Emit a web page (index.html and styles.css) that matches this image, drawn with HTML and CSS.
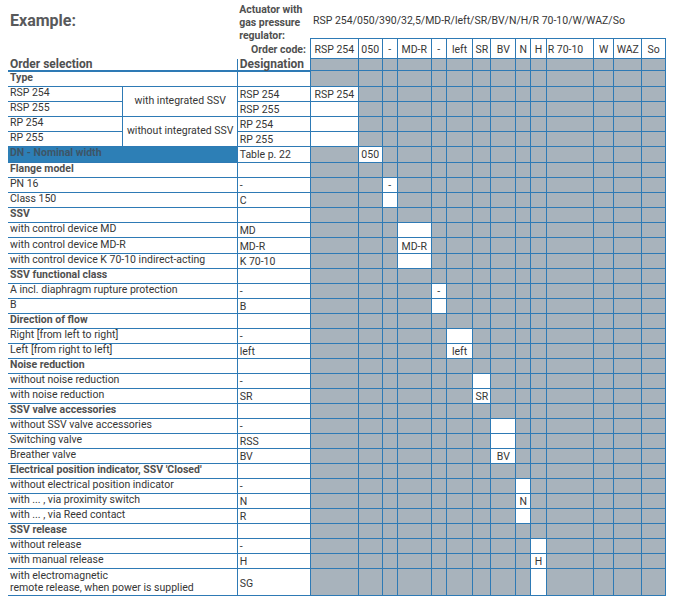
FILE: index.html
```html
<!DOCTYPE html>
<html lang="en">
<head>
<meta charset="utf-8">
<title>Example order code</title>
<link rel="stylesheet" href="styles.css">
</head>
<body>
<table class="sheet">
<colgroup>
<col class="c1"><col class="c2"><col class="c3">
<col class="k1"><col class="k2"><col class="k3"><col class="k4"><col class="k5"><col class="k6"><col class="k7">
<col class="k8"><col class="k9"><col class="k10"><col class="k11"><col class="k12"><col class="k13"><col class="k14">
</colgroup>
<tbody>
<tr class="top">
<td colspan="2" class="title">Example:</td>
<td class="act"><div class="act-text">Actuator with<br>gas pressure<br>regulator:</div></td>
<td colspan="14" class="code">RSP 254/050/390/32,5/MD-R/left/SR/BV/N/H/R 70-10/W/WAZ/So</td>
</tr>
<tr class="codes">
<td colspan="2"></td>
<td class="oc">Order code:</td>
<td class="h">RSP 254</td><td class="h">050</td><td class="h">-</td><td class="h">MD-R</td><td class="h">-</td><td class="h">left</td><td class="h">SR</td><td class="h">BV</td><td class="h">N</td><td class="h">H</td><td class="h hl">R 70-10</td><td class="h">W</td><td class="h">WAZ</td><td class="h">So</td>
</tr>
<tr class="sel">
<td colspan="2" class="sh">Order selection</td>
<td class="sh sd">Designation</td>
<td class="g"></td><td class="g"></td><td class="g"></td><td class="g"></td><td class="g"></td><td class="g"></td><td class="g"></td><td class="g"></td><td class="g"></td><td class="g"></td><td class="g"></td><td class="g"></td><td class="g"></td><td class="g"></td>
</tr>

<tr class="ra"><td colspan="2" class="l b">Type</td><td class="d"></td><td class="g"></td><td class="g"></td><td class="g"></td><td class="g"></td><td class="g"></td><td class="g"></td><td class="g"></td><td class="g"></td><td class="g"></td><td class="g"></td><td class="g"></td><td class="g"></td><td class="g"></td><td class="g"></td></tr>
<tr class="ra"><td class="l s">RSP 254</td><td rowspan="2" class="sub">with integrated SSV</td><td class="d">RSP 254</td><td class="w">RSP 254</td><td class="g"></td><td class="g"></td><td class="g"></td><td class="g"></td><td class="g"></td><td class="g"></td><td class="g"></td><td class="g"></td><td class="g"></td><td class="g"></td><td class="g"></td><td class="g"></td><td class="g"></td></tr>
<tr class="ra"><td class="l s">RSP 255</td><td class="d">RSP 255</td><td class="w"></td><td class="g"></td><td class="g"></td><td class="g"></td><td class="g"></td><td class="g"></td><td class="g"></td><td class="g"></td><td class="g"></td><td class="g"></td><td class="g"></td><td class="g"></td><td class="g"></td><td class="g"></td></tr>
<tr class="ra"><td class="l s">RP 254</td><td rowspan="2" class="sub">without integrated SSV</td><td class="d">RP 254</td><td class="w"></td><td class="g"></td><td class="g"></td><td class="g"></td><td class="g"></td><td class="g"></td><td class="g"></td><td class="g"></td><td class="g"></td><td class="g"></td><td class="g"></td><td class="g"></td><td class="g"></td><td class="g"></td></tr>
<tr class="ra"><td class="l s">RP 255</td><td class="d">RP 255</td><td class="w"></td><td class="g"></td><td class="g"></td><td class="g"></td><td class="g"></td><td class="g"></td><td class="g"></td><td class="g"></td><td class="g"></td><td class="g"></td><td class="g"></td><td class="g"></td><td class="g"></td><td class="g"></td></tr>
<tr class="rdn"><td colspan="2" class="l b dn">DN - Nominal width</td><td class="d">Table p. 22</td><td class="g"></td><td class="w">050</td><td class="g"></td><td class="g"></td><td class="g"></td><td class="g"></td><td class="g"></td><td class="g"></td><td class="g"></td><td class="g"></td><td class="g"></td><td class="g"></td><td class="g"></td><td class="g"></td></tr>
<tr class="ra"><td colspan="2" class="l b">Flange model</td><td class="d"></td><td class="g"></td><td class="g"></td><td class="g"></td><td class="g"></td><td class="g"></td><td class="g"></td><td class="g"></td><td class="g"></td><td class="g"></td><td class="g"></td><td class="g"></td><td class="g"></td><td class="g"></td><td class="g"></td></tr>
<tr class="ra"><td colspan="2" class="l">PN 16</td><td class="d">-</td><td class="g"></td><td class="g"></td><td class="w">-</td><td class="g"></td><td class="g"></td><td class="g"></td><td class="g"></td><td class="g"></td><td class="g"></td><td class="g"></td><td class="g"></td><td class="g"></td><td class="g"></td><td class="g"></td></tr>
<tr class="ra"><td colspan="2" class="l">Class 150</td><td class="d">C</td><td class="g"></td><td class="g"></td><td class="w"></td><td class="g"></td><td class="g"></td><td class="g"></td><td class="g"></td><td class="g"></td><td class="g"></td><td class="g"></td><td class="g"></td><td class="g"></td><td class="g"></td><td class="g"></td></tr>
<tr class="ra"><td colspan="2" class="l b">SSV</td><td class="d"></td><td class="g"></td><td class="g"></td><td class="g"></td><td class="g"></td><td class="g"></td><td class="g"></td><td class="g"></td><td class="g"></td><td class="g"></td><td class="g"></td><td class="g"></td><td class="g"></td><td class="g"></td><td class="g"></td></tr>
<tr class="ra"><td colspan="2" class="l">with control device MD</td><td class="d">MD</td><td class="g"></td><td class="g"></td><td class="g"></td><td class="w"></td><td class="g"></td><td class="g"></td><td class="g"></td><td class="g"></td><td class="g"></td><td class="g"></td><td class="g"></td><td class="g"></td><td class="g"></td><td class="g"></td></tr>
<tr class="ra"><td colspan="2" class="l">with control device MD-R</td><td class="d">MD-R</td><td class="g"></td><td class="g"></td><td class="g"></td><td class="w">MD-R</td><td class="g"></td><td class="g"></td><td class="g"></td><td class="g"></td><td class="g"></td><td class="g"></td><td class="g"></td><td class="g"></td><td class="g"></td><td class="g"></td></tr>
<tr class="ra"><td colspan="2" class="l">with control device K 70-10 indirect-acting</td><td class="d">K 70-10</td><td class="g"></td><td class="g"></td><td class="g"></td><td class="w"></td><td class="g"></td><td class="g"></td><td class="g"></td><td class="g"></td><td class="g"></td><td class="g"></td><td class="g"></td><td class="g"></td><td class="g"></td><td class="g"></td></tr>
<tr class="ra"><td colspan="2" class="l b">SSV functional class</td><td class="d"></td><td class="g"></td><td class="g"></td><td class="g"></td><td class="g"></td><td class="g"></td><td class="g"></td><td class="g"></td><td class="g"></td><td class="g"></td><td class="g"></td><td class="g"></td><td class="g"></td><td class="g"></td><td class="g"></td></tr>
<tr class="ra"><td colspan="2" class="l">A incl. diaphragm rupture protection</td><td class="d">-</td><td class="g"></td><td class="g"></td><td class="g"></td><td class="g"></td><td class="w">-</td><td class="g"></td><td class="g"></td><td class="g"></td><td class="g"></td><td class="g"></td><td class="g"></td><td class="g"></td><td class="g"></td><td class="g"></td></tr>
<tr class="ra"><td colspan="2" class="l">B</td><td class="d">B</td><td class="g"></td><td class="g"></td><td class="g"></td><td class="g"></td><td class="w"></td><td class="g"></td><td class="g"></td><td class="g"></td><td class="g"></td><td class="g"></td><td class="g"></td><td class="g"></td><td class="g"></td><td class="g"></td></tr>
<tr><td colspan="2" class="l b">Direction of flow</td><td class="d"></td><td class="g"></td><td class="g"></td><td class="g"></td><td class="g"></td><td class="g"></td><td class="g"></td><td class="g"></td><td class="g"></td><td class="g"></td><td class="g"></td><td class="g"></td><td class="g"></td><td class="g"></td><td class="g"></td></tr>
<tr><td colspan="2" class="l">Right [from left to right]</td><td class="d">-</td><td class="g"></td><td class="g"></td><td class="g"></td><td class="g"></td><td class="g"></td><td class="w"></td><td class="g"></td><td class="g"></td><td class="g"></td><td class="g"></td><td class="g"></td><td class="g"></td><td class="g"></td><td class="g"></td></tr>
<tr><td colspan="2" class="l">Left [from right to left]</td><td class="d">left</td><td class="g"></td><td class="g"></td><td class="g"></td><td class="g"></td><td class="g"></td><td class="w">left</td><td class="g"></td><td class="g"></td><td class="g"></td><td class="g"></td><td class="g"></td><td class="g"></td><td class="g"></td><td class="g"></td></tr>
<tr><td colspan="2" class="l b">Noise reduction</td><td class="d"></td><td class="g"></td><td class="g"></td><td class="g"></td><td class="g"></td><td class="g"></td><td class="g"></td><td class="g"></td><td class="g"></td><td class="g"></td><td class="g"></td><td class="g"></td><td class="g"></td><td class="g"></td><td class="g"></td></tr>
<tr><td colspan="2" class="l">without noise reduction</td><td class="d">-</td><td class="g"></td><td class="g"></td><td class="g"></td><td class="g"></td><td class="g"></td><td class="g"></td><td class="w"></td><td class="g"></td><td class="g"></td><td class="g"></td><td class="g"></td><td class="g"></td><td class="g"></td><td class="g"></td></tr>
<tr><td colspan="2" class="l">with noise reduction</td><td class="d">SR</td><td class="g"></td><td class="g"></td><td class="g"></td><td class="g"></td><td class="g"></td><td class="g"></td><td class="w">SR</td><td class="g"></td><td class="g"></td><td class="g"></td><td class="g"></td><td class="g"></td><td class="g"></td><td class="g"></td></tr>
<tr><td colspan="2" class="l b">SSV valve accessories</td><td class="d"></td><td class="g"></td><td class="g"></td><td class="g"></td><td class="g"></td><td class="g"></td><td class="g"></td><td class="g"></td><td class="g"></td><td class="g"></td><td class="g"></td><td class="g"></td><td class="g"></td><td class="g"></td><td class="g"></td></tr>
<tr><td colspan="2" class="l">without SSV valve accessories</td><td class="d">-</td><td class="g"></td><td class="g"></td><td class="g"></td><td class="g"></td><td class="g"></td><td class="g"></td><td class="g"></td><td class="w"></td><td class="g"></td><td class="g"></td><td class="g"></td><td class="g"></td><td class="g"></td><td class="g"></td></tr>
<tr><td colspan="2" class="l">Switching valve</td><td class="d">RSS</td><td class="g"></td><td class="g"></td><td class="g"></td><td class="g"></td><td class="g"></td><td class="g"></td><td class="g"></td><td class="w"></td><td class="g"></td><td class="g"></td><td class="g"></td><td class="g"></td><td class="g"></td><td class="g"></td></tr>
<tr><td colspan="2" class="l">Breather valve</td><td class="d">BV</td><td class="g"></td><td class="g"></td><td class="g"></td><td class="g"></td><td class="g"></td><td class="g"></td><td class="g"></td><td class="w">BV</td><td class="g"></td><td class="g"></td><td class="g"></td><td class="g"></td><td class="g"></td><td class="g"></td></tr>
<tr><td colspan="2" class="l b">Electrical position indicator, SSV 'Closed'</td><td class="d"></td><td class="g"></td><td class="g"></td><td class="g"></td><td class="g"></td><td class="g"></td><td class="g"></td><td class="g"></td><td class="g"></td><td class="g"></td><td class="g"></td><td class="g"></td><td class="g"></td><td class="g"></td><td class="g"></td></tr>
<tr><td colspan="2" class="l">without electrical position indicator</td><td class="d">-</td><td class="g"></td><td class="g"></td><td class="g"></td><td class="g"></td><td class="g"></td><td class="g"></td><td class="g"></td><td class="g"></td><td class="w"></td><td class="g"></td><td class="g"></td><td class="g"></td><td class="g"></td><td class="g"></td></tr>
<tr><td colspan="2" class="l">with ... , via proximity switch</td><td class="d">N</td><td class="g"></td><td class="g"></td><td class="g"></td><td class="g"></td><td class="g"></td><td class="g"></td><td class="g"></td><td class="g"></td><td class="w">N</td><td class="g"></td><td class="g"></td><td class="g"></td><td class="g"></td><td class="g"></td></tr>
<tr><td colspan="2" class="l">with ... , via Reed contact</td><td class="d">R</td><td class="g"></td><td class="g"></td><td class="g"></td><td class="g"></td><td class="g"></td><td class="g"></td><td class="g"></td><td class="g"></td><td class="w"></td><td class="g"></td><td class="g"></td><td class="g"></td><td class="g"></td><td class="g"></td></tr>
<tr><td colspan="2" class="l b">SSV release</td><td class="d"></td><td class="g"></td><td class="g"></td><td class="g"></td><td class="g"></td><td class="g"></td><td class="g"></td><td class="g"></td><td class="g"></td><td class="g"></td><td class="g"></td><td class="g"></td><td class="g"></td><td class="g"></td><td class="g"></td></tr>
<tr><td colspan="2" class="l">without release</td><td class="d">-</td><td class="g"></td><td class="g"></td><td class="g"></td><td class="g"></td><td class="g"></td><td class="g"></td><td class="g"></td><td class="g"></td><td class="g"></td><td class="w"></td><td class="g"></td><td class="g"></td><td class="g"></td><td class="g"></td></tr>
<tr><td colspan="2" class="l">with manual release</td><td class="d">H</td><td class="g"></td><td class="g"></td><td class="g"></td><td class="g"></td><td class="g"></td><td class="g"></td><td class="g"></td><td class="g"></td><td class="g"></td><td class="w">H</td><td class="g"></td><td class="g"></td><td class="g"></td><td class="g"></td></tr>
<tr class="rlast"><td colspan="2" class="l two">with electromagnetic<br>remote release, when power is supplied</td><td class="d dm">SG</td><td class="g"></td><td class="g"></td><td class="g"></td><td class="g"></td><td class="g"></td><td class="g"></td><td class="g"></td><td class="g"></td><td class="g"></td><td class="w"></td><td class="g"></td><td class="g"></td><td class="g"></td><td class="g"></td></tr>
</tbody>
</table>
</body>
</html>
```

FILE: styles.css
```css
:root {
  --line: #2e7ab5;
  --cell: #a8b3bc;
  --text: #363636;
  --head: #505050;
}

body {
  margin: 0;
  padding: 0 8px;
  background: #ffffff;
  font-family: Roboto, "Liberation Sans", sans-serif;
  font-size: 10.5px;
  color: var(--text);
}

.sheet {
  border-collapse: collapse;
  table-layout: fixed;
  width: 657.5px;
}

.c1 { width: 114.7px; }
.c2 { width: 115px; }
.c3 { width: 72.8px; }
.k1 { width: 47.7px; }
.k2 { width: 24px; }
.k3 { width: 15px; }
.k4 { width: 34px; }
.k5 { width: 15px; }
.k6 { width: 26.6px; }
.k7 { width: 18px; }
.k8 { width: 25px; }
.k9 { width: 15px; }
.k10 { width: 15.4px; }
.k11 { width: 47.6px; }
.k12 { width: 20px; }
.k13 { width: 28px; }
.k14 { width: 23.7px; }

.sheet td {
  padding: 0;
  white-space: nowrap;
  vertical-align: middle;
  line-height: 14px;
}

tr { height: 15px; }
tr.ra { height: 15.12px; }
tr.rdn { height: 16px; }
tr.rlast { height: 27px; }
tr.top { height: 38.5px; }
tr.codes { height: 20px; }
tr.sel { height: 12px; }

/* header area */
.sheet td.title {
  vertical-align: top;
  padding: 10.5px 0 0 2px;
  font-size: 16px;
  line-height: 20px;
  font-weight: 700;
  color: #58595b;
}

.sheet td.act {
  vertical-align: top;
  padding: 2.5px 0 0 1.5px;
  font-weight: 700;
  color: var(--head);
}

.act-text {
  height: 36px;
  line-height: 13px;
  overflow: visible;
}

.sheet td.code {
  vertical-align: top;
  padding: 13.5px 0 0 2.5px;
}

.sheet td.oc {
  text-align: right;
  padding: 1px 4px 0 0;
  line-height: 13px;
  font-weight: 700;
  color: var(--head);
}

.sheet td.h {
  background: #ffffff;
  border: 1px solid var(--line);
  text-align: center;
  padding-top: 1px;
  line-height: 13px;
}

.sheet td.hl {
  text-align: left;
  padding-left: 1px;
}

.sheet td.sh {
  padding: 0 0 0 2px;
  font-size: 12px;
  line-height: 11px;
  font-weight: 700;
  color: var(--head);
  border-bottom: 2px solid var(--line);
}

.sheet td.sd {
  border-left: 1px solid var(--line);
  padding-left: 1.5px;
}

/* grid */
.sheet td.g {
  background: var(--cell);
  border: 1px solid var(--line);
}

.sheet td.w {
  background: #ffffff;
  border: 1px solid var(--line);
  text-align: center;
  line-height: 12px;
  padding-top: 2px;
}

/* left part */
.sheet td.l {
  padding: 0 0 2px 2px;
  line-height: 12px;
  border-bottom: 1px solid var(--line);
}

.sheet td.b {
  font-weight: 700;
  color: var(--head);
}

.sheet td.s {
  border-right: 1px solid var(--line);
}

.sheet td.sub {
  text-align: center;
  border-bottom: 1px solid var(--line);
}

.sheet td.dn {
  background: #2d7fb6;
  color: #3d5567;
}

.sheet td.two {
  white-space: normal;
  line-height: 12px;
  padding-bottom: 1px;
}

.sheet td.d {
  padding: 2px 0 0 1.5px;
  line-height: 12px;
  border-left: 1px solid var(--line);
  border-bottom: 1px solid var(--line);
}

.sheet td.dm {
  padding-top: 3px;
}
```
